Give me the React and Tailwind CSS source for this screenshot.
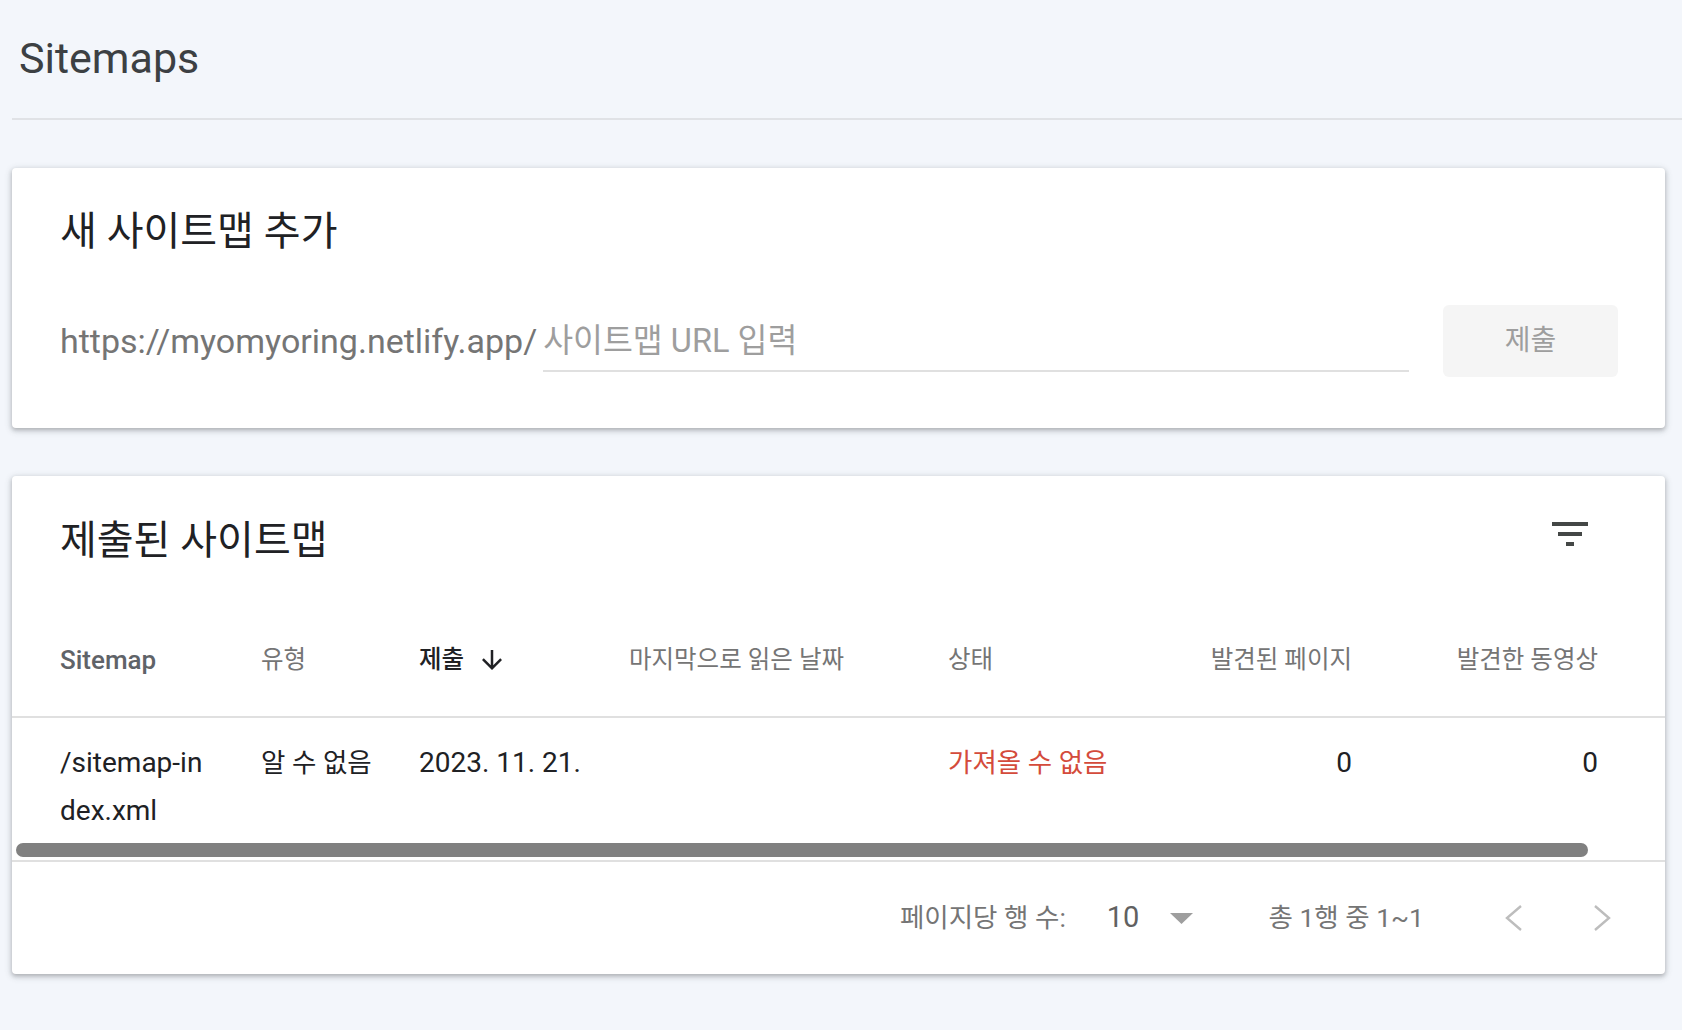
import React from 'react';

const FilterIcon = () => (
  <svg width="48" height="48" viewBox="0 0 24 24" className="fill-[#444746]">
    <path d="M10 18h4v-2h-4v2zM3 6v2h18V6H3zm3 7h12v-2H6v2z" />
  </svg>
);

const ArrowDown = () => (
  <svg width="20" height="20" viewBox="4 4 16 16" className="fill-[#202124]">
    <path d="M20 12l-1.41-1.41L13 16.17V4h-2v12.17l-5.58-5.59L4 12l8 8 8-8z" />
  </svg>
);

const Chevron = ({ dir }) => (
  <div className="w-[48px] h-[48px] flex items-center justify-center">
    <svg width="18" height="26" viewBox="0 0 18 26" fill="none" stroke="#bdbdbd" strokeWidth="2.4">
      {dir === 'left' ? <polyline points="16,1 2,13 16,25" /> : <polyline points="2,1 16,13 2,25" />}
    </svg>
  </div>
);

const cols = 'grid grid-cols-[201px_158px_210px_319px_212px_192px_246px] pl-[48px] pr-[67px]';

export default function App() {
  return (
    <div className="min-h-screen bg-[#f3f6fb] pl-[12px] pr-[17px] pb-10 font-['Roboto','Noto_Sans_CJK_KR',sans-serif]">
      {/* page header */}
      <div className="pt-[33px] pl-[7px]">
        <h1 className="text-[43px] leading-[50px] text-[#3c4043]">Sitemaps</h1>
      </div>
      <div className="mt-[35px] h-[2px] bg-[#e0e2e6] -mr-[17px]"></div>

      {/* add sitemap */}
      <div className="mt-[48px] bg-white rounded-[4px] shadow-[0_2px_4px_rgba(60,64,67,0.3),0_2px_6px_2px_rgba(60,64,67,0.12)] pl-[48px] pr-[47px] pt-[42px] pb-[51px]">
        <h2 className="text-[40px] leading-[44px] text-[#202124]">새 사이트맵 추가</h2>
        <div className="mt-[51px] flex items-start gap-[34px]">
          <div className="flex-1 flex items-start mt-[16px]">
            <span className="text-[34px] leading-[40px] text-[#757575] whitespace-nowrap">
              https://myomyoring.netlify.app/
            </span>
            <input
              placeholder="사이트맵 URL 입력"
              className="ml-[6px] flex-1 min-w-0 h-[51px] pb-[9px] leading-[40px] text-[32.5px] text-[#202124] border-b-2 border-[#e0e0e0] outline-none bg-transparent placeholder:text-[#9e9e9e]"
            />
          </div>
          <button className="w-[175px] h-[72px] rounded-[6px] bg-[#f5f5f5] text-[28px] text-[#9e9e9e]">제출</button>
        </div>
      </div>

      {/* submitted sitemaps */}
      <div className="mt-[48px] bg-white rounded-[4px] shadow-[0_2px_4px_rgba(60,64,67,0.3),0_2px_6px_2px_rgba(60,64,67,0.12)] overflow-hidden">
        <div className="flex items-start justify-between pl-[48px] pr-[71px] pt-[34px] mb-[41px]">
          <h2 className="mt-[9px] text-[40px] leading-[44px] text-[#202124]">제출된 사이트맵</h2>
          <FilterIcon />
        </div>

        <div className={`${cols} h-[114px] items-center border-b-2 border-[#e0e0e0]`}>
          <div className="text-[26px] font-medium text-[#5f6368]">Sitemap</div>
          <div className="text-[24.5px] text-[#757575]">유형</div>
          <div className="flex items-center gap-[18px] text-[24.5px] font-medium text-[#202124]">
            <span>제출</span>
            <ArrowDown />
          </div>
          <div className="text-[24.5px] text-[#757575]">마지막으로 읽은 날짜</div>
          <div className="text-[24.5px] text-[#757575]">상태</div>
          <div className="text-[24.5px] text-[#757575] text-right">발견된 페이지</div>
          <div className="text-[24.5px] text-[#757575] text-right">발견한 동영상</div>
        </div>

        <div className={`${cols} items-start pt-[21px] pb-[8px] leading-[48px] text-[#202124]`}>
          <div className="w-[152px] break-all text-[28px]">/sitemap-index.xml</div>
          <div className="text-[26.5px]">알 수 없음</div>
          <div className="text-[28px]">2023. 11. 21.</div>
          <div></div>
          <div className="text-[26.5px] text-[#d44b3b]">가져올 수 없음</div>
          <div className="text-[28px] text-right">0</div>
          <div className="text-[28px] text-right">0</div>
        </div>

        <div className="pb-[3px]">
          <div className="ml-[4px] w-[1572px] h-[14px] rounded-full bg-[#808080]"></div>
        </div>

        <div className="h-[114px] border-t-2 border-[#e0e0e0] flex items-center justify-end pr-[39px]">
          <span className="text-[26.5px] text-[#757575]">페이지당 행 수:</span>
          <span className="ml-[41px] text-[29px] text-[#616161]">10</span>
          <svg width="23" height="11" viewBox="0 0 23 11" className="ml-[31px] fill-[#9e9e9e]">
            <polygon points="0,0 23,0 11.5,11" />
          </svg>
          <span className="ml-[75px] text-[26.5px] text-[#757575]">총 1행 중 1~1</span>
          <div className="ml-[66px]">
            <Chevron dir="left" />
          </div>
          <div className="ml-[40px]">
            <Chevron dir="right" />
          </div>
        </div>
      </div>
    </div>
  );
}
